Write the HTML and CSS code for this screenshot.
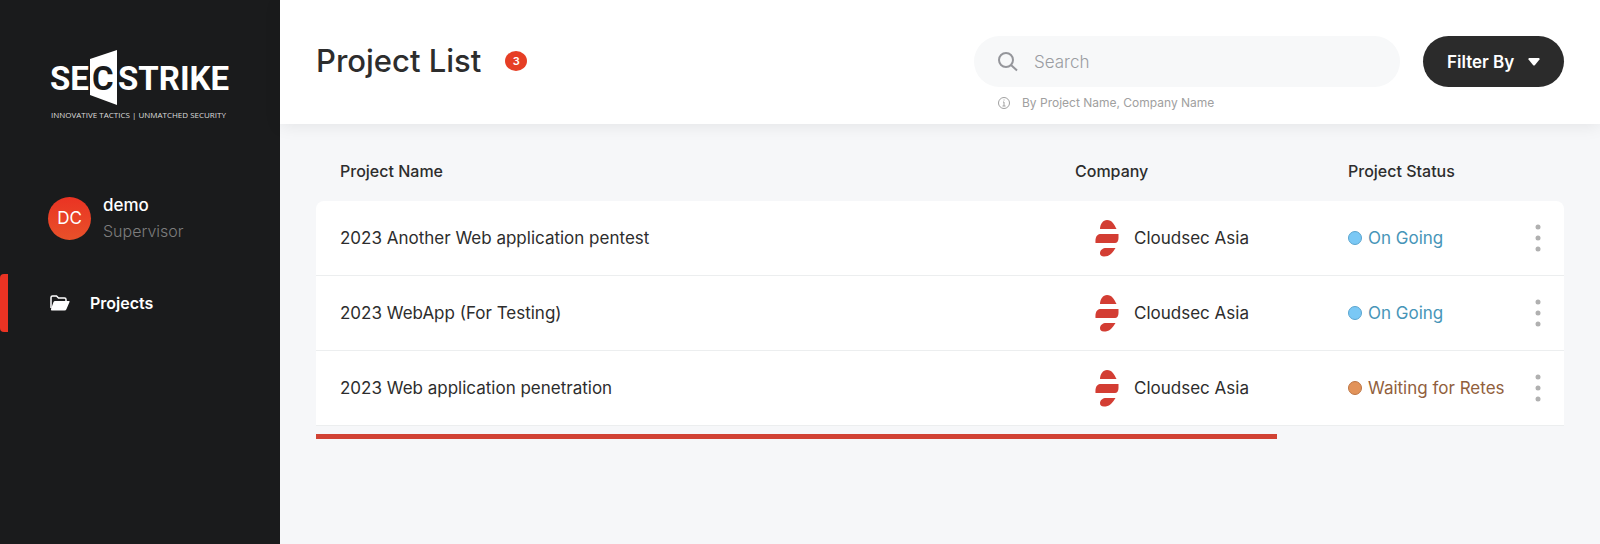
FILE: index.html
```html
<!DOCTYPE html>
<html lang="en">
<head>
    <meta charset="UTF-8">
    <meta name="viewport" content="width=device-width, initial-scale=1.0">
    <title>Project List</title>
    <link rel="stylesheet" href="styles.css">
</head>
<body>
    <!-- Shared icons -->
    <svg class="sprite" aria-hidden="true">
        <symbol id="cloudsec" viewBox="0 0 24 38">
            <path d="M5 10C5 5 8 1 12 1C17 1 19 5 21.500 10Z"/>
            <path d="M5 15H23.500V19C23.500 22 22 24 20 24H0.500C0 19 1.500 15.500 5 15Z"/>
            <path d="M20.500 29C17 35 14 37.500 9 37.500C6 37.500 5 36 5 34C5 31 8 29 11 29Z"/>
        </symbol>
        <symbol id="dots" viewBox="0 0 6 28">
            <circle cx="3" cy="3" r="2.500"/>
            <circle cx="3" cy="14" r="2.500"/>
            <circle cx="3" cy="25" r="2.500"/>
        </symbol>
    </svg>

    <aside class="sidebar">
        <svg class="logo" viewBox="0 0 180 72" role="img" aria-label="Secstrike">
            <path class="logo-shape" d="M40 9L67 0V55L40 45Z"/>
            <text class="logo-name" x="0" y="40">SE</text>
            <text class="logo-name logo-dark" x="42" y="40">C</text>
            <text class="logo-name" x="68" y="40">STRIKE</text>
            <text class="logo-tagline" x="1" y="68">INNOVATIVE TACTICS | UNMATCHED SECURITY</text>
        </svg>

        <div class="user">
            <span class="avatar">DC</span>
            <div>
                <div class="user-name">demo</div>
                <div class="user-role">Supervisor</div>
            </div>
        </div>

        <nav>
            <a href="#" class="nav-link">
                <svg class="nav-icon" viewBox="0 0 20 16" aria-hidden="true">
                    <path d="M1 13V2.500Q1 1 2.500 1H6.500L8.500 3H14.500Q16 3 16 4.500V6" fill="none" stroke="currentColor" stroke-width="1.500"/>
                    <path d="M5 6H19Q20 6 19.500 7L16.500 14Q16 15.500 14.500 15.500H2Q0.500 15.500 1 14L3.500 7Q4 6 5 6Z" fill="currentColor"/>
                </svg>
                Projects
            </a>
        </nav>
    </aside>

    <main class="main">
        <header class="header">
            <h1>Project List</h1>
            <span class="count">3</span>
            <div class="search">
                <label class="search-box">
                    <svg class="search-icon" viewBox="0 0 20 20" aria-label="Search">
                        <circle cx="8" cy="8" r="7"/>
                        <path d="M13 13L19 18.500"/>
                    </svg>
                    <input type="text" placeholder="Search">
                </label>
                <p class="hint">
                    <svg class="hint-icon" viewBox="0 0 12 12" aria-hidden="true">
                        <circle cx="6" cy="6" r="5.500"/>
                        <path d="M5 5H6V9M4.500 9H7.500M6 2.500V3.500"/>
                    </svg>
                    By Project Name, Company Name
                </p>
            </div>
            <button class="filter">
                Filter By
                <svg class="caret" viewBox="0 0 12 8" aria-hidden="true"><path d="M1 0H11Q12 0.500 11.500 1.500L7 7Q6 8 5 7L0.500 1.500Q0 0.500 1 0Z" fill="currentColor"/></svg>
            </button>
        </header>

        <section class="content">
            <table>
                <thead>
                    <tr>
                        <th>Project Name</th>
                        <th class="col-company">Company</th>
                        <th class="col-status">Project Status</th>
                        <th class="col-menu"></th>
                    </tr>
                </thead>
                <tbody>
                    <tr>
                        <td>2023 Another Web application pentest</td>
                        <td><div class="company"><svg class="company-logo"><use href="#cloudsec"/></svg>Cloudsec Asia</div></td>
                        <td class="status-cell"><div class="status ongoing"><span>On Going</span></div></td>
                        <td class="menu-cell"><button class="menu" aria-label="Actions"><svg><use href="#dots"/></svg></button></td>
                    </tr>
                    <tr>
                        <td>2023 WebApp (For Testing)</td>
                        <td><div class="company"><svg class="company-logo"><use href="#cloudsec"/></svg>Cloudsec Asia</div></td>
                        <td class="status-cell"><div class="status ongoing"><span>On Going</span></div></td>
                        <td class="menu-cell"><button class="menu" aria-label="Actions"><svg><use href="#dots"/></svg></button></td>
                    </tr>
                    <tr>
                        <td>2023 Web application penetration</td>
                        <td><div class="company"><svg class="company-logo"><use href="#cloudsec"/></svg>Cloudsec Asia</div></td>
                        <td class="status-cell"><div class="status waiting"><span>Waiting for Retest</span></div></td>
                        <td class="menu-cell"><button class="menu" aria-label="Actions"><svg><use href="#dots"/></svg></button></td>
                    </tr>
                </tbody>
            </table>
            <div class="scrollbar"></div>
        </section>
    </main>
</body>
</html>
```
FILE: styles.css
```css
* {
    box-sizing: border-box;
}
body {
    margin: 0;
    min-height: 100vh;
    display: flex;
    background-color: #f6f7f9;
    color: #2d2d2d;
    font-family: Inter, "Open Sans", sans-serif;
    font-size: 17px;
}
.sprite {
    position: absolute;
    width: 0;
    height: 0;
}
button, input {
    font: inherit;
    border: none;
}

/* Sidebar */
.sidebar {
    width: 280px;
    flex-shrink: 0;
    padding: 50px 0;
    background-color: #1a1b1c;
    color: white;
}
.logo {
    display: block;
    width: 180px;
    height: 72px;
    margin-left: 50px;
    overflow: visible;
}
.logo-shape {
    fill: white;
}
.logo-name {
    font-family: Roboto, sans-serif;
    font-size: 33px;
    font-weight: bold;
    fill: white;
}
.logo-dark {
    fill: #1a1b1c;
}
.logo-tagline {
    font-family: "Open Sans", sans-serif;
    font-size: 8px;
    fill: #ddd;
}
.user {
    display: flex;
    align-items: center;
    gap: 12px;
    margin: 70px 0 0 48px;
}
.avatar {
    width: 43px;
    height: 43px;
    border-radius: 50%;
    background: linear-gradient(#ea3323, #e8512a);
    display: flex;
    align-items: center;
    justify-content: center;
    font-size: 17px;
}
.user-name {
    font-weight: 500;
    line-height: 26px;
}
.user-role {
    color: #7d7d7d;
    font-size: 16px;
    font-weight: 300;
    line-height: 26px;
}
.nav-link {
    display: flex;
    align-items: center;
    gap: 20px;
    height: 58px;
    margin-top: 30px;
    padding-left: 42px;
    border-left: 8px solid #ea3323;
    border-radius: 4px;
    color: white;
    font-weight: 600;
    font-size: 16px;
    text-decoration: none;
}
.nav-icon {
    width: 20px;
    height: 16px;
}

/* Header */
.main {
    flex: 1;
    min-width: 0;
}
.header {
    display: flex;
    align-items: flex-start;
    padding: 36px 36px 12px;
    background-color: white;
    box-shadow: 0 2px 16px rgba(0, 0, 0, 0.08);
}
h1 {
    margin: 0;
    font-size: 31px;
    font-weight: 500;
    line-height: 50px;
}
.count {
    width: 22px;
    height: 20px;
    margin: 15px auto 0 24px;
    border-radius: 50%;
    background-color: #e63e25;
    color: white;
    font-size: 11px;
    font-weight: 600;
    line-height: 20px;
    text-align: center;
}
.search {
    width: 426px;
    margin-right: 23px;
}
.search-box {
    display: flex;
    align-items: center;
    gap: 16px;
    height: 51px;
    padding: 0 24px;
    border-radius: 26px;
    background-color: #f7f8f9;
}
.search-icon {
    width: 20px;
    height: 20px;
    fill: none;
    stroke: #95969b;
    stroke-width: 2;
}
.search input {
    flex: 1;
    min-width: 0;
    padding: 0;
    background: none;
    outline: none;
}
.search input::placeholder {
    color: #9b9da2;
    font-weight: 300;
}
.hint {
    display: flex;
    align-items: center;
    gap: 12px;
    margin: 6px 0 0 24px;
    color: #a0a0a0;
    font-size: 12px;
    line-height: 19px;
}
.hint-icon {
    width: 12px;
    height: 12px;
    fill: none;
    stroke: #a0a0a0;
}
.filter {
    display: flex;
    align-items: center;
    justify-content: space-between;
    width: 141px;
    height: 51px;
    padding: 0 24px;
    border-radius: 26px;
    background-color: #2b2b2b;
    color: white;
    font-weight: 600;
    white-space: nowrap;
    cursor: pointer;
}
.caret {
    width: 12px;
    height: 8px;
}

/* Project table */
.content {
    padding: 16px 36px;
}
table {
    width: 100%;
    table-layout: fixed;
    border-collapse: separate;
    border-spacing: 0;
}
th {
    height: 61px;
    padding: 0 24px;
    font-size: 16px;
    font-weight: 500;
    text-align: left;
}
.col-company {
    width: 273px;
}
.col-status {
    width: 188px;
}
.col-menu {
    width: 52px;
}
td {
    height: 75px;
    padding: 0 24px;
    background-color: white;
    border-bottom: 1px solid #eceeef;
}
tbody tr:first-child td:first-child {
    border-top-left-radius: 8px;
}
tbody tr:first-child td:last-child {
    border-top-right-radius: 8px;
}
.company {
    display: flex;
    align-items: center;
    gap: 15px;
    padding-left: 20px;
    white-space: nowrap;
}
.company-logo {
    width: 24px;
    height: 38px;
    fill: #d33d33;
}
.status-cell {
    padding-right: 8px;
}
.status {
    display: flex;
    align-items: center;
    gap: 6px;
    overflow: hidden;
    white-space: nowrap;
}
.status::before {
    content: "";
    flex-shrink: 0;
    width: 12px;
    height: 12px;
    border: 1px solid #5aa5cf;
    border-radius: 50%;
    background-color: #7ac8f5;
}
.ongoing {
    color: #4795b8;
}
.waiting {
    color: #91603d;
}
.waiting::before {
    background-color: #e2935a;
    border-color: #bd7544;
}
.menu-cell {
    padding: 0;
    text-align: center;
}
.menu {
    padding: 0;
    background: none;
    vertical-align: middle;
    cursor: pointer;
}
.menu svg {
    display: block;
    width: 6px;
    height: 28px;
    fill: #b0b0b0;
}
.scrollbar {
    width: 77%;
    height: 5px;
    margin-top: 8px;
    background-color: #d14234;
}
```
